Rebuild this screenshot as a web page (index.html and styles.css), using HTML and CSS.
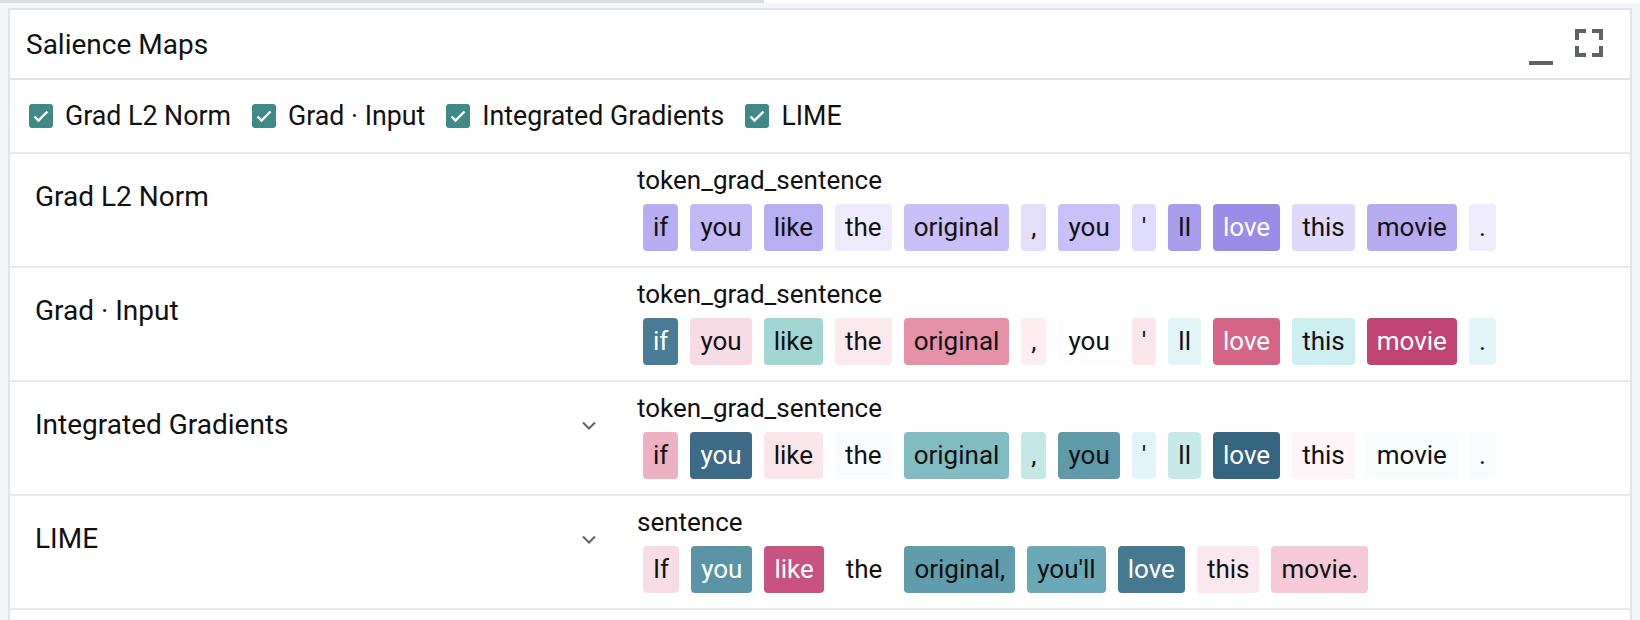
FILE: index.html
```html
<!DOCTYPE html>
<html>
<head>
<meta charset="utf-8">
<link rel="stylesheet" href="styles.css">
</head>
<body>
<div class="topbar"><div class="topbar-fill"></div></div>
<div class="panel">
  <div class="header">
    <div class="title">Salience Maps</div>
    <div class="header-icons">
      <svg class="ic-min" width="24" height="36" viewBox="0 0 24 36"><rect x="0" y="32" width="24" height="4" fill="#5f6368"/></svg>
      <svg class="ic-full" width="28" height="36" viewBox="0 0 28 36"><path d="M2 11V2H11M17 2H26V11M2 17V26H11M17 26H26V17" fill="none" stroke="#5f6368" stroke-width="4"/></svg>
    </div>
  </div>
  <div class="checks">
    <label class="check"><span class="box"><svg width="24" height="24" viewBox="0 0 24 24"><path d="M5.5 12.5l4 4L18.5 7.5" fill="none" stroke="#fff" stroke-width="2.4"/></svg></span>Grad L2 Norm</label>
    <label class="check"><span class="box"><svg width="24" height="24" viewBox="0 0 24 24"><path d="M5.5 12.5l4 4L18.5 7.5" fill="none" stroke="#fff" stroke-width="2.4"/></svg></span>Grad · Input</label>
    <label class="check"><span class="box"><svg width="24" height="24" viewBox="0 0 24 24"><path d="M5.5 12.5l4 4L18.5 7.5" fill="none" stroke="#fff" stroke-width="2.4"/></svg></span>Integrated Gradients</label>
    <label class="check"><span class="box"><svg width="24" height="24" viewBox="0 0 24 24"><path d="M5.5 12.5l4 4L18.5 7.5" fill="none" stroke="#fff" stroke-width="2.4"/></svg></span>LIME</label>
  </div>

  <div class="row">
    <div class="method"><span class="method-name">Grad L2 Norm</span></div>
    <div class="field">
      <div class="field-name">token_grad_sentence</div>
      <div class="tokens">
        <span class="tok" style="background:#b8adf2">if</span>
        <span class="tok" style="background:#c2b9f5">you</span>
        <span class="tok" style="background:#b8aef2">like</span>
        <span class="tok" style="background:#eeebfc">the</span>
        <span class="tok" style="background:#c7bff6">original</span>
        <span class="tok" style="background:#e3dffb">,</span>
        <span class="tok" style="background:#c8c0f6">you</span>
        <span class="tok" style="background:#e0dcfb">'</span>
        <span class="tok" style="background:#a89ded">ll</span>
        <span class="tok light" style="background:#9a8ce7">love</span>
        <span class="tok" style="background:#dfdafb">this</span>
        <span class="tok" style="background:#b6abf1">movie</span>
        <span class="tok" style="background:#efecfc">.</span>
      </div>
    </div>
  </div>

  <div class="row">
    <div class="method"><span class="method-name">Grad · Input</span></div>
    <div class="field">
      <div class="field-name">token_grad_sentence</div>
      <div class="tokens">
        <span class="tok light" style="background:#4a7c95">if</span>
        <span class="tok" style="background:#f7dbe4">you</span>
        <span class="tok" style="background:#a3d6d3">like</span>
        <span class="tok" style="background:#fbe9ee">the</span>
        <span class="tok" style="background:#e592a8">original</span>
        <span class="tok" style="background:#fcedf1">,</span>
        <span class="tok" style="background:#fdfdfd">you</span>
        <span class="tok" style="background:#fae6eb">'</span>
        <span class="tok" style="background:#e2f5f9">ll</span>
        <span class="tok light" style="background:#d56587">love</span>
        <span class="tok" style="background:#cdeff2">this</span>
        <span class="tok light" style="background:#c04473">movie</span>
        <span class="tok" style="background:#e2f5f9">.</span>
      </div>
    </div>
  </div>

  <div class="row">
    <div class="method"><span class="method-name">Integrated Gradients</span><svg class="chev" width="14" height="9" viewBox="0 0 14 9"><path d="M1 1.5l6 6 6-6" fill="none" stroke="#5f6368" stroke-width="2"/></svg></div>
    <div class="field">
      <div class="field-name">token_grad_sentence</div>
      <div class="tokens">
        <span class="tok" style="background:#eeb0c3">if</span>
        <span class="tok light" style="background:#3d6a86">you</span>
        <span class="tok" style="background:#fae5eb">like</span>
        <span class="tok" style="background:#f8fcfe">the</span>
        <span class="tok" style="background:#82bcc3">original</span>
        <span class="tok" style="background:#c3e8e5">,</span>
        <span class="tok" style="background:#5f9aa8">you</span>
        <span class="tok" style="background:#e2f4fa">'</span>
        <span class="tok" style="background:#c5eae8">ll</span>
        <span class="tok light" style="background:#346580">love</span>
        <span class="tok" style="background:#fdf5f7">this</span>
        <span class="tok" style="background:#f7fcfd">movie</span>
        <span class="tok" style="background:#f7fcfd">.</span>
      </div>
    </div>
  </div>

  <div class="row">
    <div class="method"><span class="method-name">LIME</span><svg class="chev" width="14" height="9" viewBox="0 0 14 9"><path d="M1 1.5l6 6 6-6" fill="none" stroke="#5f6368" stroke-width="2"/></svg></div>
    <div class="field">
      <div class="field-name">sentence</div>
      <div class="tokens">
        <span class="tok" style="background:#f8dce5">If</span>
        <span class="tok light" style="background:#5b94a6">you</span>
        <span class="tok light" style="background:#c85280">like</span>
        <span class="tok" style="background:transparent">the</span>
        <span class="tok" style="background:#609cab">original,</span>
        <span class="tok" style="background:#6ba8b5">you'll</span>
        <span class="tok light" style="background:#46788f">love</span>
        <span class="tok" style="background:#fbe8ee">this</span>
        <span class="tok" style="background:#f5c9d6">movie.</span>
      </div>
    </div>
  </div>
</div>
</body>
</html>
```

FILE: styles.css
```css
html, body {
  margin: 0;
  padding: 0;
}
body {
  background: #f3f6f8;
  font-family: Roboto, "Liberation Sans", sans-serif;
  color: #111;
  width: 1640px;
  height: 620px;
  overflow: hidden;
}
.topbar {
  height: 3px;
  background: #ffffff;
}
.topbar-fill {
  width: 764px;
  height: 3px;
  background: #dadce0;
}
.panel {
  margin: 5px 8px 0 8px;
  background: #fff;
  border: 2px solid #e2e3e7;
  border-bottom: none;
  min-height: 610px;
}
.header {
  height: 68px;
  display: flex;
  justify-content: space-between;
  align-items: flex-start;
  border-bottom: 2px solid #e2e3e7;
}
.title {
  font-size: 28px;
  line-height: 34px;
  padding: 18px 0 0 16px;
  color: #111;
}
.header-icons {
  display: flex;
  gap: 22px;
  padding: 19px 27px 0 0;
}
.checks {
  height: 72px;
  display: flex;
  align-items: center;
  padding-left: 19px;
  border-bottom: 2px solid #e6e6eb;
}
.check {
  display: flex;
  align-items: center;
  font-size: 26.75px;
  margin-right: 21px;
  color: #111;
}
.box {
  width: 24px;
  height: 24px;
  border-radius: 3px;
  background: #3f8a87;
  margin-right: 12px;
  display: flex;
}
.row {
  display: grid;
  grid-template-columns: 617px 1fr;
  border-bottom: 2px solid #e6e6eb;
  height: 112px;
}
.method {
  display: flex;
  justify-content: space-between;
  align-items: center;
  align-self: start;
  padding: 26px 31px 0 25px;
  height: 34px;
}
.method-name {
  font-size: 28px;
  line-height: 34px;
  color: #111;
}
.field {
  padding: 11px 0 0 10px;
}
.field-name {
  font-size: 26px;
  line-height: 30px;
  color: #111;
}
.tokens {
  display: flex;
  margin-top: 9px;
}
.tok {
  display: inline-block;
  height: 47px;
  line-height: 47px;
  padding: 0 10px;
  margin: 0 6px;
  border-radius: 4px;
  font-size: 26px;
  color: #111;
}
.tok.light {
  color: #fff;
}
```
